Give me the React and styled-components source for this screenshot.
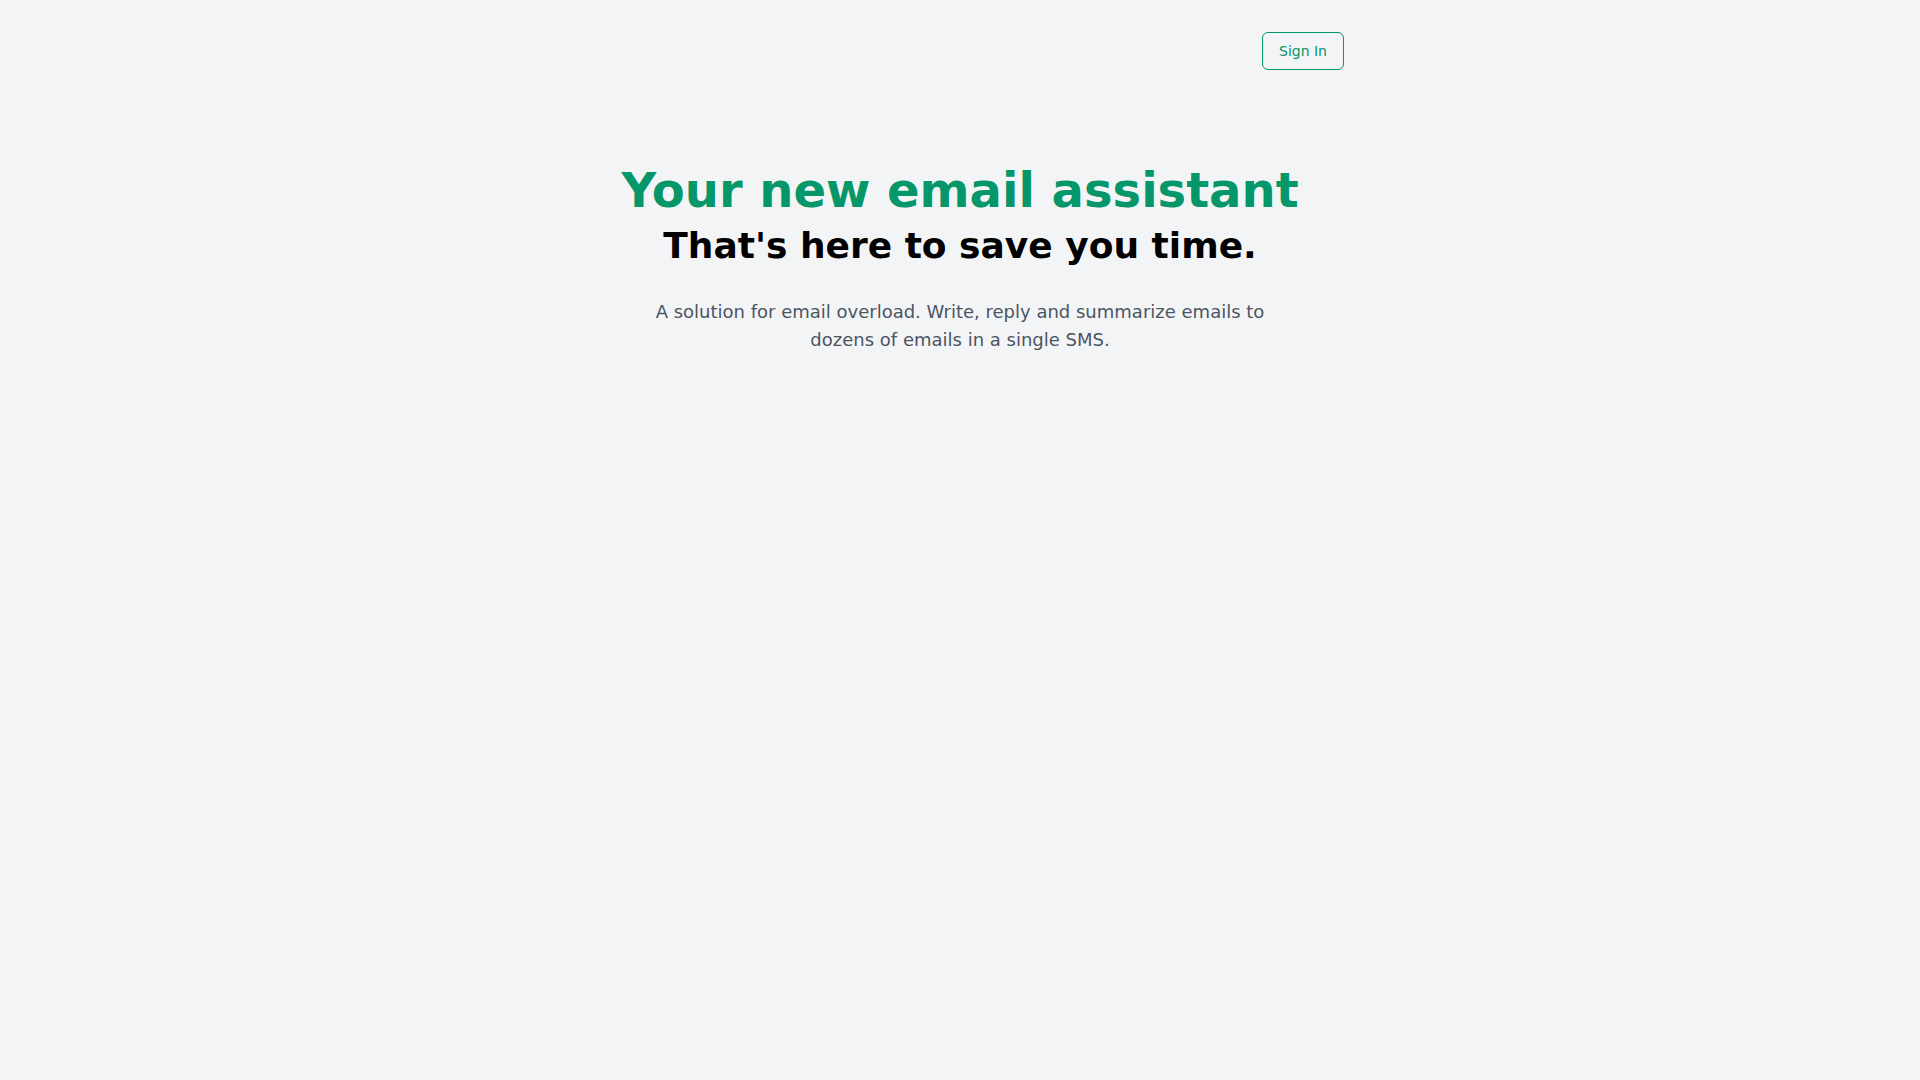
import React from 'react';
import styled, { createGlobalStyle } from 'styled-components';

const GlobalStyle = createGlobalStyle`
  html, body {
    margin: 0;
    padding: 0;
    background: #f3f4f6;
    font-family: "DejaVu Sans", sans-serif;
  }
  * {
    box-sizing: border-box;
  }
`;

const App = () => {
  return (
    <Page>
      <GlobalStyle />
      <Container>
        <Nav>
          <SignInButton>Sign In</SignInButton>
        </Nav>
        <Hero>
          <Title>Your new email assistant</Title>
          <Subtitle>That's here to save you time.</Subtitle>
          <Description>
            A solution for email overload. Write, reply and summarize emails to
            dozens of emails in a single SMS.
          </Description>
        </Hero>
      </Container>
    </Page>
  );
};

export default App;

const Page = styled.div`
  min-height: 100vh;
  background: #f3f4f6;
`;

const Container = styled.div`
  max-width: 768px;
  margin: 0 auto;
  padding-top: 32px;
`;

const Nav = styled.nav`
  display: flex;
  justify-content: flex-end;
`;

const SignInButton = styled.button`
  font-family: "DejaVu Sans", sans-serif;
  font-size: 14px;
  font-weight: 400;
  line-height: 20px;
  padding: 8px 16px;
  color: #059669;
  background: transparent;
  border: 1px solid #059669;
  border-radius: 6px;
  cursor: pointer;
`;

const Hero = styled.div`
  display: flex;
  flex-direction: column;
  align-items: center;
  text-align: center;
  padding-top: 96px;
`;

const Title = styled.h1`
  margin: 0;
  font-size: 48px;
  line-height: 1;
  font-weight: 700;
  color: #059669;
`;

const Subtitle = styled.h2`
  margin: 12px 0 0;
  font-size: 36px;
  line-height: 40px;
  font-weight: 700;
  color: #000;
`;

const Description = styled.p`
  margin: 32px 0 0;
  max-width: 672px;
  font-size: 18px;
  line-height: 28px;
  color: #4b5563;
`;
